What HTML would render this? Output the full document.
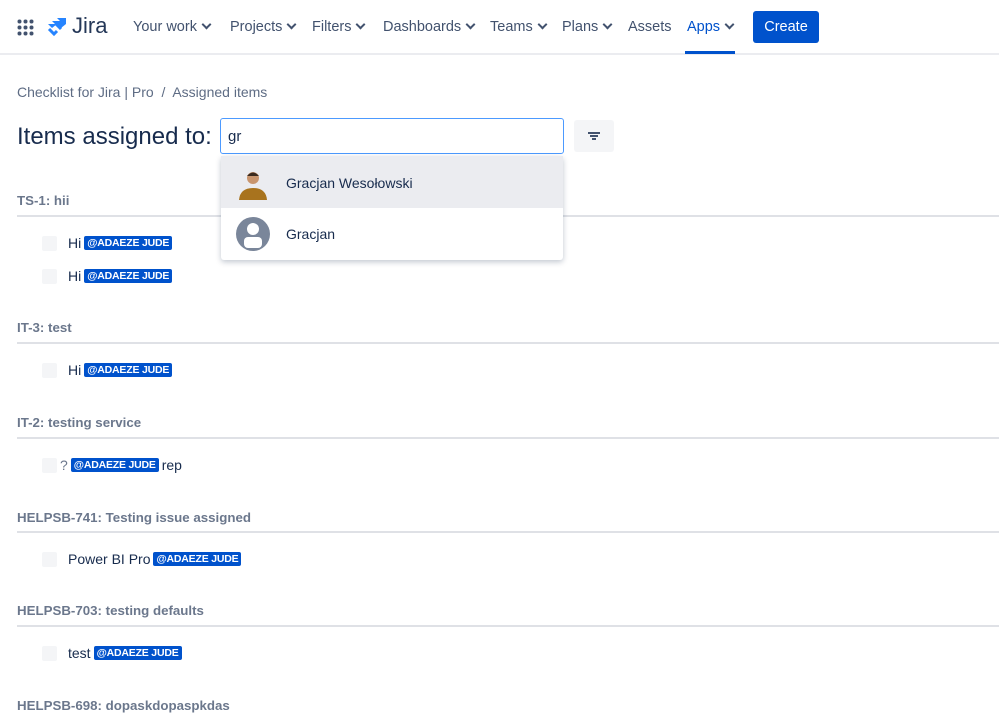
<!DOCTYPE html><html><head><style>
*{box-sizing:border-box;margin:0;padding:0}
body{width:999px;height:717px;overflow:hidden;background:#fff;font-family:"Liberation Sans",sans-serif;color:#172b4d;position:relative}
.nav{position:absolute;left:0;top:0;width:999px;height:55px;border-bottom:2px solid #ebecf0}
.ni{position:absolute;top:19px;font-size:14.5px;color:#42526e}
.ni.c:after{content:"";display:inline-block;width:5px;height:5px;border-right:2px solid #42526e;border-bottom:2px solid #42526e;transform:rotate(45deg);margin-left:6px;position:relative;top:-3px}
.a{position:absolute;font-size:14px}
.h{position:absolute;left:17px;font-size:13.3px;font-weight:bold;color:#6b778c}
.ln{position:absolute;left:17px;width:982px;height:2px;background:#dfe1e6}
.cb{position:absolute;width:15px;height:15px;background:#f4f5f7;border-radius:2px}
.row{position:absolute;font-size:14px;color:#172b4d;display:flex;align-items:center;gap:3px}
.tag{background:#0052cc;color:#fff;font-weight:bold;font-size:10.5px;padding:1px 3px;border-radius:2px;letter-spacing:-0.2px}
</style></head><body>
<div class="nav">
<svg style="position:absolute;left:17px;top:19px" width="17" height="17" viewBox="0 0 17 17" fill="#42526e"><circle cx="2.5" cy="2.5" r="2"/><circle cx="8.5" cy="2.5" r="2"/><circle cx="14.5" cy="2.5" r="2"/><circle cx="2.5" cy="8.5" r="2"/><circle cx="8.5" cy="8.5" r="2"/><circle cx="14.5" cy="8.5" r="2"/><circle cx="2.5" cy="14.5" r="2"/><circle cx="8.5" cy="14.5" r="2"/><circle cx="14.5" cy="14.5" r="2"/></svg>
<svg style="position:absolute;left:47px;top:17px" width="20" height="21" viewBox="0 0 20 21"><path d="M19 1H10l3 3-8 0 3 3H1l4 4 5-4 4 4 5-4z" fill="#2684ff"/><path d="M2 12l5 5 3-3M9 7l5 5" stroke="#2684ff" stroke-width="3" fill="none"/></svg>
<div style="position:absolute;left:72px;top:13px;font-size:22px;color:#253858">Jira</div>
<div class="ni c" style="left:133px">Your work</div>
<div class="ni c" style="left:230px">Projects</div>
<div class="ni c" style="left:312px">Filters</div>
<div class="ni c" style="left:383px">Dashboards</div>
<div class="ni c" style="left:490px">Teams</div>
<div class="ni c" style="left:562px">Plans</div>
<div class="ni" style="left:628px">Assets</div>
<div class="ni c" style="left:687px;color:#0052cc">Apps</div>
<div style="position:absolute;left:685px;top:51px;width:50px;height:3px;background:#0052cc"></div>
<div style="position:absolute;left:753px;top:11px;width:66px;height:32px;background:#0052cc;border-radius:3px;color:#fff;font-size:14.5px;text-align:center;line-height:32px">Create</div>
</div>
<div class="a" style="left:17px;top:84px;color:#5e6c84">Checklist for Jira | Pro &nbsp;/&nbsp; Assigned items</div>
<div style="position:absolute;left:17px;top:123px;font-size:24px;color:#172b4d">Items assigned to:</div>
<div style="position:absolute;left:220px;top:118px;width:344px;height:36px;border:1px solid #4c9aff;border-radius:3px;font-size:15px;padding:9px 7px">gr</div>
<div style="position:absolute;left:574px;top:120px;width:40px;height:32px;background:#f4f5f7;border-radius:3px"><div style="position:absolute;left:14px;top:12px;width:12px;height:1.5px;background:#42526e"></div><div style="position:absolute;left:16px;top:15px;width:8px;height:1.5px;background:#42526e"></div><div style="position:absolute;left:18px;top:18px;width:4px;height:1.5px;background:#42526e"></div></div>

<div class="h" style="top:193px">TS-1: hii</div><div class="ln" style="top:215px"></div>
<div class="cb" style="left:42px;top:236px"></div><div class="row" style="left:68px;top:235px">Hi <span class="tag">@ADAEZE JUDE</span></div>
<div class="cb" style="left:42px;top:269px"></div><div class="row" style="left:68px;top:268px">Hi <span class="tag">@ADAEZE JUDE</span></div>
<div class="h" style="top:320px">IT-3: test</div><div class="ln" style="top:342px"></div>
<div class="cb" style="left:42px;top:363px"></div><div class="row" style="left:68px;top:362px">Hi <span class="tag">@ADAEZE JUDE</span></div>
<div class="h" style="top:415px">IT-2: testing service</div><div class="ln" style="top:437px"></div>
<div class="cb" style="left:42px;top:458px"></div><div class="row" style="left:60px;top:457px;color:#6b778c">? <span class="tag">@ADAEZE JUDE</span> <span style="color:#172b4d">rep</span></div>
<div class="h" style="top:510px">HELPSB-741: Testing issue assigned</div><div class="ln" style="top:531px"></div>
<div class="cb" style="left:42px;top:552px"></div><div class="row" style="left:68px;top:551px">Power BI Pro <span class="tag">@ADAEZE JUDE</span></div>
<div class="h" style="top:603px">HELPSB-703: testing defaults</div><div class="ln" style="top:625px"></div>
<div class="cb" style="left:42px;top:646px"></div><div class="row" style="left:68px;top:645px">test <span class="tag">@ADAEZE JUDE</span></div>
<div class="h" style="top:698px">HELPSB-698: dopaskdopaspkdas</div>

<div style="position:absolute;left:221px;top:156px;width:342px;height:104px;background:#fff;border-radius:3px;box-shadow:0 2px 6px rgba(9,30,66,.25)">
<div style="height:52px;background:#ebecf0;position:relative">
<svg style="position:absolute;left:16px;top:12px" width="32" height="32" viewBox="0 0 32 32"><circle cx="16" cy="10" r="6" fill="#c8956e"/><path d="M10 8q6-7 12 0z" fill="#3a2a1e"/><path d="M2 32q1-12 14-12q13 0 14 12z" fill="#a8731e"/></svg>
<div style="position:absolute;left:65px;top:19px;font-size:14px">Gracjan Wesołowski</div></div>
<div style="height:52px;position:relative">
<svg style="position:absolute;left:15px;top:9px" width="34" height="34" viewBox="0 0 34 34"><circle cx="17" cy="17" r="17" fill="#7a869a"/><circle cx="17" cy="12" r="6" fill="#fff"/><rect x="8" y="20" width="18" height="11" rx="4" fill="#fff"/></svg>
<div style="position:absolute;left:65px;top:18px;font-size:14px">Gracjan</div></div>
</div>
</body></html>
